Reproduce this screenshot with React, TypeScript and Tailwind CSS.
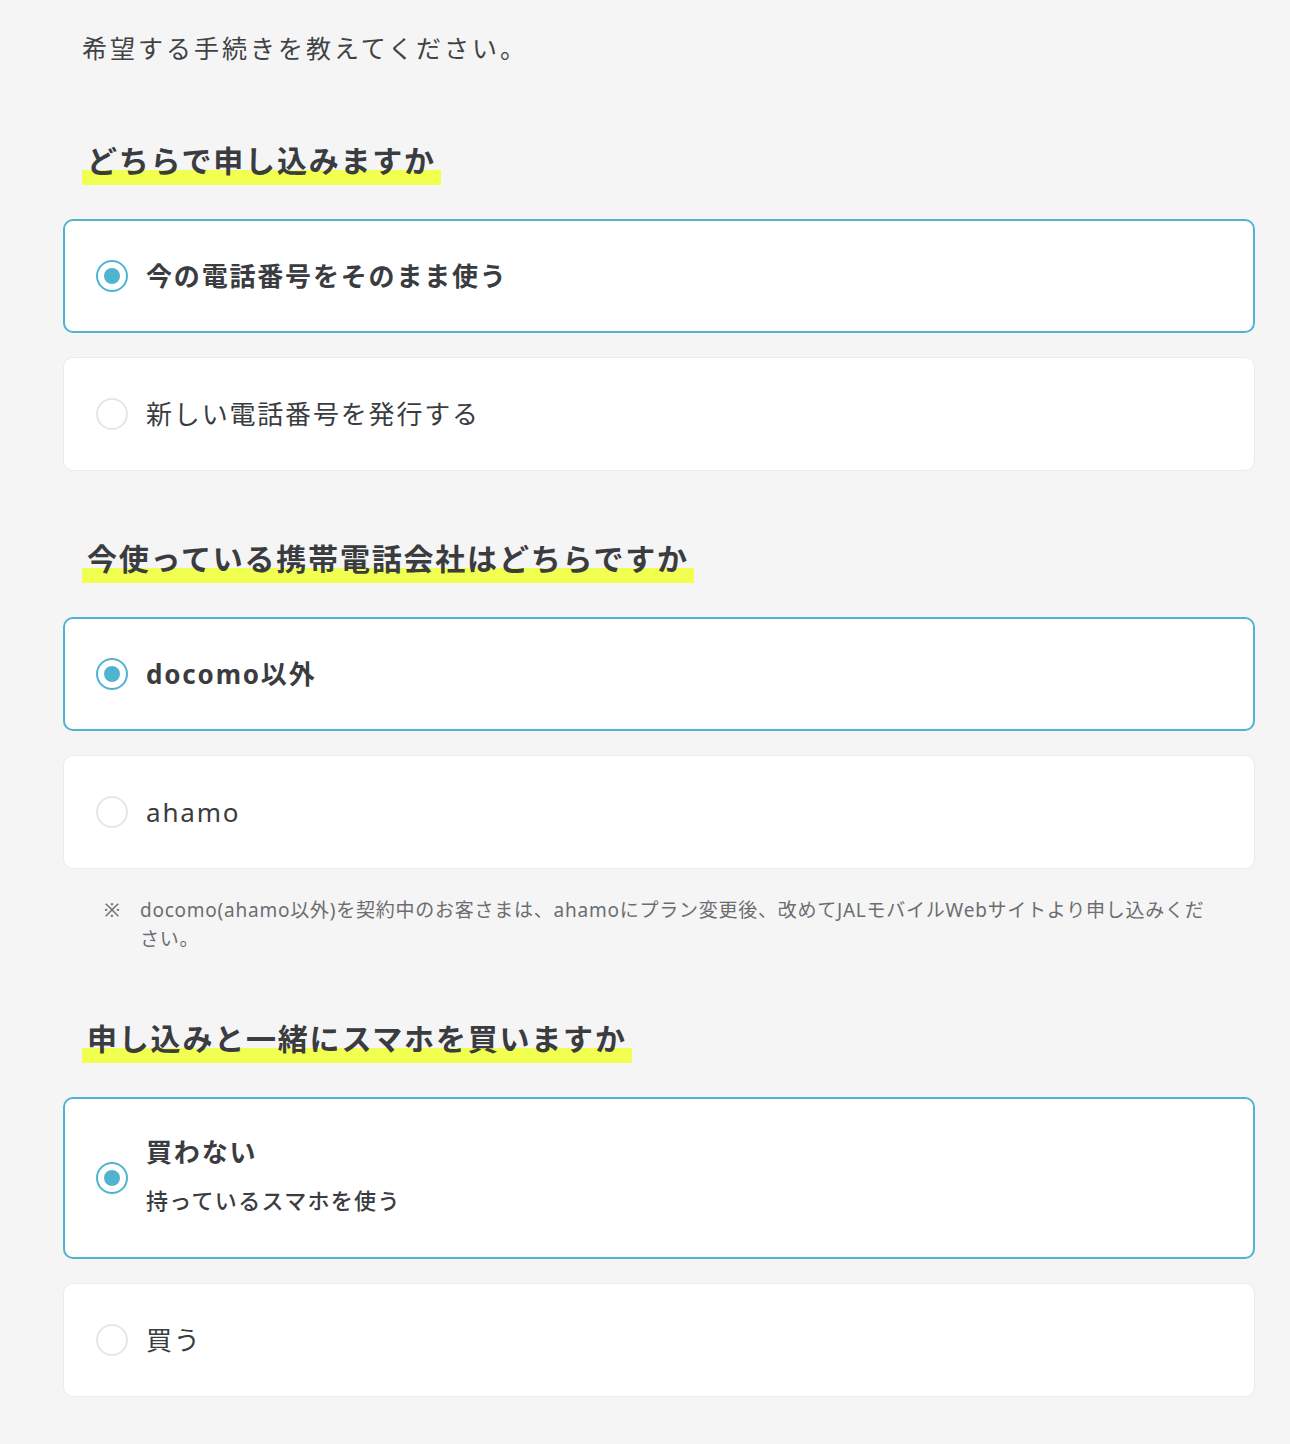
import React from 'react';

type Option = {
  label: string;
  sub?: string;
  selected: boolean;
};

type Question = {
  title: string;
  options: Option[];
  note?: string;
};

const questions: Question[] = [
  {
    title: 'どちらで申し込みますか',
    options: [
      { label: '今の電話番号をそのまま使う', selected: true },
      { label: '新しい電話番号を発行する', selected: false },
    ],
  },
  {
    title: '今使っている携帯電話会社はどちらですか',
    options: [
      { label: 'docomo以外', selected: true },
      { label: 'ahamo', selected: false },
    ],
    note: 'docomo(ahamo以外)を契約中のお客さまは、ahamoにプラン変更後、改めてJALモバイルWebサイトより申し込みください。',
  },
  {
    title: '申し込みと一緒にスマホを買いますか',
    options: [
      { label: '買わない', sub: '持っているスマホを使う', selected: true },
      { label: '買う', selected: false },
    ],
  },
];

function Radio({ checked }: { checked: boolean }) {
  return checked ? (
    <span className="flex h-[32px] w-[32px] shrink-0 items-center justify-center rounded-full border-2 border-[#4fb4d0] bg-white">
      <span className="h-[16px] w-[16px] rounded-full bg-[#4fb4d0]" />
    </span>
  ) : (
    <span className="h-[32px] w-[32px] shrink-0 rounded-full border-2 border-[#e6e6e6] bg-white" />
  );
}

function OptionCard({ option }: { option: Option }) {
  return (
    <label
      className={
        option.selected
          ? 'flex items-center gap-[18px] rounded-[10px] border-2 border-[#4fb4d0] bg-white pl-[31px] pr-6'
          : 'flex items-center gap-[18px] rounded-[10px] border border-[#ebebea] bg-white pl-[32px] pr-6'
      }
      style={{ minHeight: option.sub ? 162 : 114 }}
    >
      <Radio checked={option.selected} />
      <div className={option.sub ? 'flex flex-col pb-[7px]' : 'flex flex-col'}>
        <span
          className={
            option.selected
              ? 'text-[26px] font-bold leading-[36px] tracking-[0.07em] text-[#3a3c3f]'
              : 'text-[26px] font-normal leading-[36px] tracking-[0.07em] text-[#3a3c3f]'
          }
        >
          {option.label}
        </span>
        {option.sub ? (
          <span className="mt-[15px] text-[22px] font-medium leading-[30px] tracking-[0.06em] text-[#3a3c3f]">
            {option.sub}
          </span>
        ) : null}
      </div>
    </label>
  );
}

export default function App() {
  return (
    <div
      className="min-h-[1444px] bg-[#f5f5f5] pb-[47px] pl-[63px] pr-[35px] pt-[32px] text-[#3a3c3f]"
      style={{ fontFamily: '"Noto Sans", "Noto Sans CJK JP", sans-serif' }}
    >
      <p className="pl-[19px] text-[25px] leading-[32px] tracking-[0.12em] text-[#404244]">
        希望する手続きを教えてください。
      </p>

      {questions.map((q, i) => (
        <section key={q.title} className={i === 0 ? 'mt-[79px]' : i === 1 ? 'mt-[70px]' : 'mt-[67px]'}>
          <h2 className="pl-[19px]">
            <span className="inline-block bg-[linear-gradient(to_bottom,transparent_64%,#f0ff50_64%)] px-[5px] pb-[6px] text-[30px] font-bold leading-[36px] tracking-[0.06em]">
              {q.title}
            </span>
          </h2>

          <div className="mt-[34px] flex flex-col gap-[24px]">
            {q.options.map((o) => (
              <OptionCard key={o.label} option={o} />
            ))}
          </div>

          {q.note ? (
            <div className="mt-[27px] flex pl-[41px] pr-[40px] text-[19px] leading-[29px] tracking-[0.04em] text-[#6b6d70]">
              <span className="w-[36px] shrink-0">※</span>
              <p>{q.note}</p>
            </div>
          ) : null}
        </section>
      ))}
    </div>
  );
}
